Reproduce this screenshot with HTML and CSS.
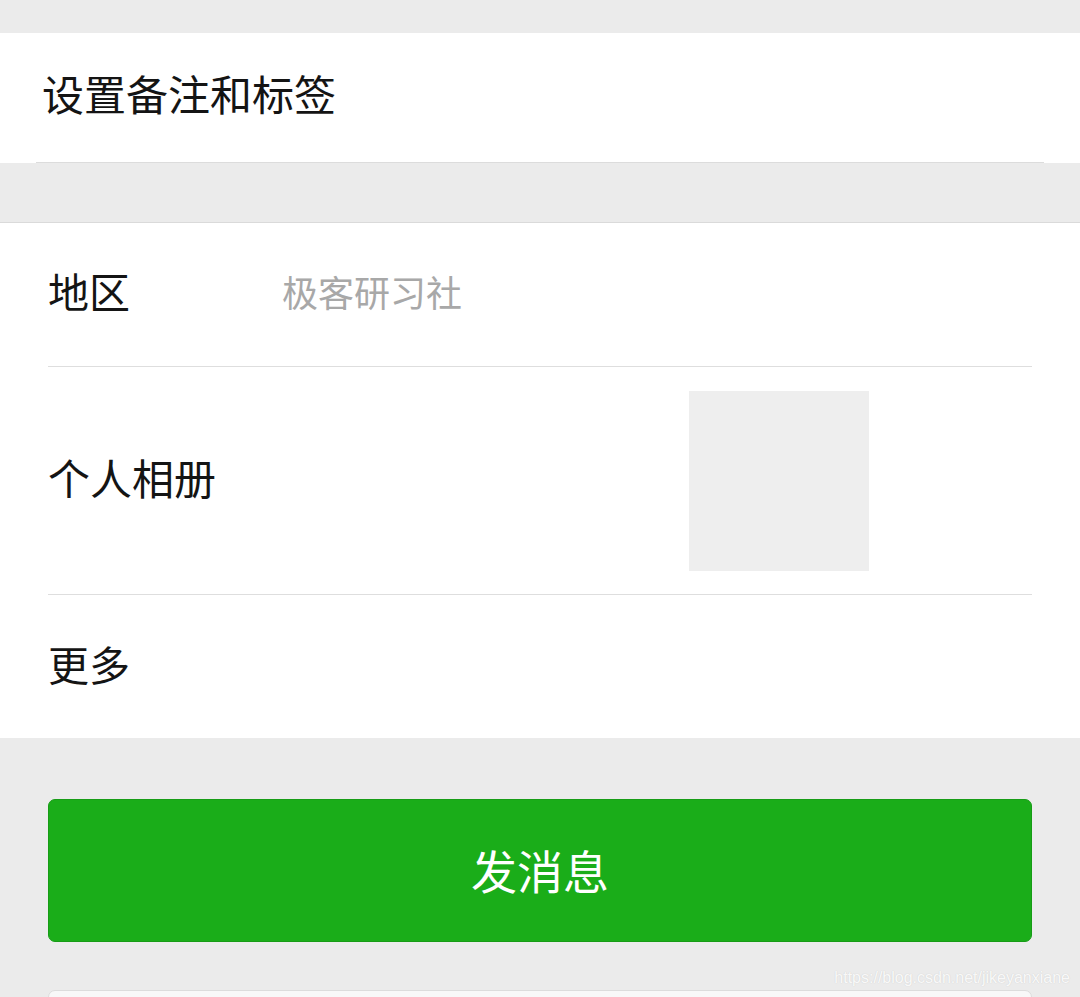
FILE: index.html
```html
<!DOCTYPE html>
<html lang="zh-CN">
<head>
<meta charset="utf-8">
<title>详细资料</title>
<link rel="stylesheet" href="styles.css">
</head>
<body>
<div class="page">
  <div class="gap-top"></div>
  <section class="remark">
    <div class="remark-row">设置备注和标签</div>
  </section>
  <div class="gap-mid"></div>
  <section class="info">
    <div class="row row-region">
      <span class="label">地区</span>
      <span class="value">极客研习社</span>
    </div>
    <div class="row row-album">
      <span class="label">个人相册</span>
      <div class="photos"><div class="photo"></div></div>
    </div>
    <div class="row row-more">
      <span class="label">更多</span>
    </div>
  </section>
  <div class="actions">
    <button class="btn btn-primary">发消息</button>
    <div class="btn btn-default"></div>
  </div>
  <div class="watermark">https://blog.csdn.net/jikeyanxiane</div>
</div>
</body>
</html>
```

FILE: styles.css
```css
html, body {
  margin: 0;
  padding: 0;
  background: #ebebeb;
  overflow: hidden;
  font-family: "Noto Sans CJK SC", "Noto Sans", sans-serif;
  color: #141414;
}

.page {
  position: relative;
  width: 1080px;
  height: 997px;
  overflow: hidden;
}

.gap-top {
  height: 33px;
}

.remark {
  background: #fff;
  padding: 0 36px;
}

.remark-row {
  height: 130px;
  display: flex;
  align-items: center;
  padding-left: 6px;
  padding-bottom: 9px;
  box-sizing: border-box;
  border-bottom: 1px solid #dcdcdc;
  font-size: 42px;
  line-height: 1;
}

.gap-mid {
  height: 59px;
}

.info {
  background: #fff;
  border-top: 1px solid #dadada;
  padding: 0 48px;
}

.row {
  display: flex;
  align-items: center;
  box-sizing: border-box;
  border-bottom: 1px solid #dedede;
}

.row-region {
  height: 144px;
  padding-bottom: 8px;
}

.row-album {
  height: 228px;
}

.row-album .label {
  position: relative;
  top: -4px;
  font-size: 42px;
}

.row-more {
  height: 143px;
  padding-bottom: 7px;
  border-bottom: none;
}

.label {
  font-size: 41px;
  line-height: 1;
  width: 234px;
  flex: none;
}

.value {
  font-size: 36px;
  line-height: 1;
  color: #a8a8a8;
}

.photos {
  flex: 1;
  display: flex;
  justify-content: flex-end;
  padding-right: 163px;
  padding-top: 1px;
}

.photo {
  width: 180px;
  height: 180px;
  background: #eeeeee;
}

.actions {
  padding: 61px 48px 0;
  display: flex;
  flex-direction: column;
  gap: 48px;
}

.btn {
  display: block;
  box-sizing: border-box;
  width: 100%;
  height: 143px;
  border-radius: 7px;
  font-family: "Noto Sans CJK SC", "Noto Sans", sans-serif;
  font-size: 46px;
  line-height: 1;
  padding: 0 0 3px;
}

.btn-primary {
  background: #1aad19;
  border: 1px solid #179c16;
  color: #fff;
}

.btn-default {
  background: #f8f8f8;
  border: 1px solid #dcdcdc;
}

.watermark {
  position: absolute;
  right: 10px;
  bottom: 10px;
  font-family: "Liberation Sans", Arial, sans-serif;
  font-size: 16px;
  color: rgba(255, 255, 255, 0.9);
  text-shadow: 0 0 1px rgba(120, 120, 120, 0.3);
}
```
